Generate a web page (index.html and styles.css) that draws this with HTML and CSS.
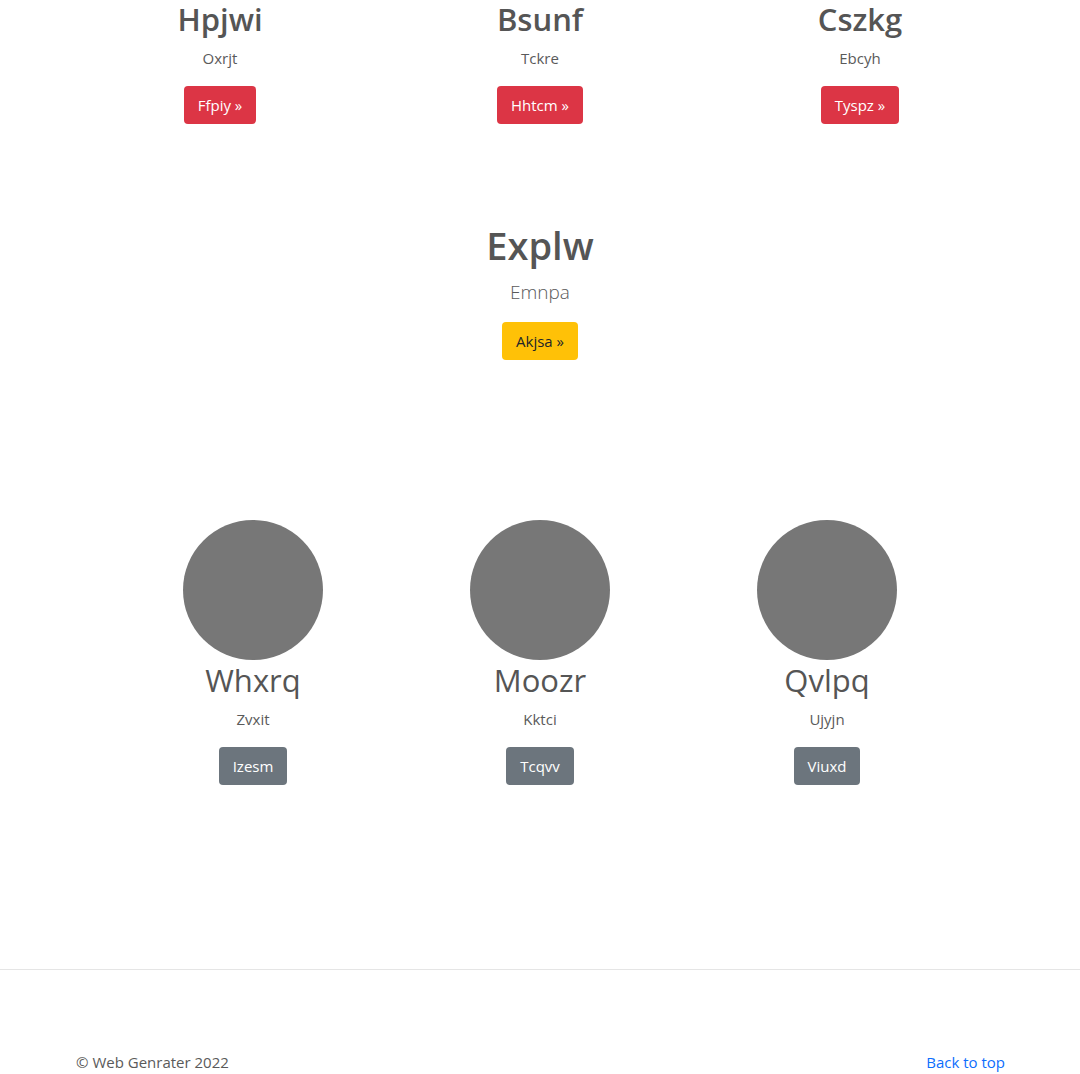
FILE: index.html
```html
<!DOCTYPE html>
<html lang="en">
<head>
<meta charset="utf-8">
<title>Web Genrater</title>
<link rel="stylesheet" href="styles.css">
</head>
<body>
<main>
  <section class="top-row">
    <div class="col">
      <h2 class="heading">Hpjwi</h2>
      <p class="text">Oxrjt</p>
      <a class="btn btn-danger" href="#">Ffpiy &raquo;</a>
    </div>
    <div class="col">
      <h2 class="heading">Bsunf</h2>
      <p class="text">Tckre</p>
      <a class="btn btn-danger" href="#">Hhtcm &raquo;</a>
    </div>
    <div class="col">
      <h2 class="heading">Cszkg</h2>
      <p class="text">Ebcyh</p>
      <a class="btn btn-danger" href="#">Tyspz &raquo;</a>
    </div>
  </section>

  <section class="feature">
    <h1 class="feature-title">Explw</h1>
    <p class="lead">Emnpa</p>
    <a class="btn btn-warning" href="#">Akjsa &raquo;</a>
  </section>

  <section class="marketing">
    <div class="col">
      <div class="avatar"></div>
      <h2 class="name">Whxrq</h2>
      <p class="text">Zvxit</p>
      <a class="btn btn-secondary" href="#">Izesm</a>
    </div>
    <div class="col">
      <div class="avatar"></div>
      <h2 class="name">Moozr</h2>
      <p class="text">Kktci</p>
      <a class="btn btn-secondary" href="#">Tcqvv</a>
    </div>
    <div class="col">
      <div class="avatar"></div>
      <h2 class="name">Qvlpq</h2>
      <p class="text">Ujyjn</p>
      <a class="btn btn-secondary" href="#">Viuxd</a>
    </div>
  </section>
</main>
<hr class="divider">
<footer class="footer">
  <p class="copy">&copy; Web Genrater 2022</p>
  <a class="back" href="#">Back to top</a>
</footer>
</body>
</html>
```

FILE: styles.css
```css
* { box-sizing: border-box; }
html, body { margin: 0; padding: 0; }
body {
  font-family: "Open Sans", "Noto Sans", sans-serif;
  font-size: 16px;
  line-height: 1.5;
  color: #5a5a5a;
  background: #fff;
}
main { padding-top: 1px; }
.top-row {
  width: 960px;
  margin: 0 auto;
  display: grid;
  grid-template-columns: repeat(3, 1fr);
}
.col {
  display: flex;
  flex-direction: column;
  align-items: center;
  text-align: center;
}
.heading {
  margin: 0 0 8px;
  font-size: 31px;
  font-weight: 600;
  line-height: 1.2;
  color: #555;
}
.text { margin: 0 0 16px; font-size: 15px; line-height: 24px; }
.btn {
  display: inline-block;
  padding: 6px 13px;
  font-size: 15px;
  line-height: 24px;
  border: 1px solid transparent;
  border-radius: 4px;
  text-decoration: none;
}
.btn-danger { background: #dc3545; color: #fff; }
.btn-warning { background: #ffc107; color: #212529; }
.btn-secondary { background: #6c757d; color: #fff; }

.feature {
  margin-top: 99px;
  display: flex;
  flex-direction: column;
  align-items: center;
}
.feature-title {
  margin: 0 0 8px;
  font-size: 38px;
  font-weight: 600;
  line-height: 1.2;
  color: #555;
}
.lead { margin: 0 0 15px; font-size: 19px; font-weight: 300; line-height: 30px; }

.marketing {
  margin: 160px auto 0;
  width: 861px;
  display: grid;
  grid-template-columns: repeat(3, 1fr);
}
.avatar {
  width: 140px;
  height: 140px;
  border-radius: 50%;
  background: #777;
}
.name {
  margin: 2px 0 8px;
  font-size: 31px;
  font-weight: 400;
  line-height: 1.2;
  color: #555;
}
.divider {
  margin: 184px 0 0;
  border: 0;
  border-top: 1px solid #e5e5e5;
}
.footer {
  width: 960px;
  margin: 0 auto;
  padding: 81px 12px 0 16px;
  display: flex;
  justify-content: space-between;
  align-items: center;
}
.copy { margin: 0; font-size: 15px; }
.back { color: #0d6efd; text-decoration: none; font-size: 15px; margin-right: 3px; }
```
